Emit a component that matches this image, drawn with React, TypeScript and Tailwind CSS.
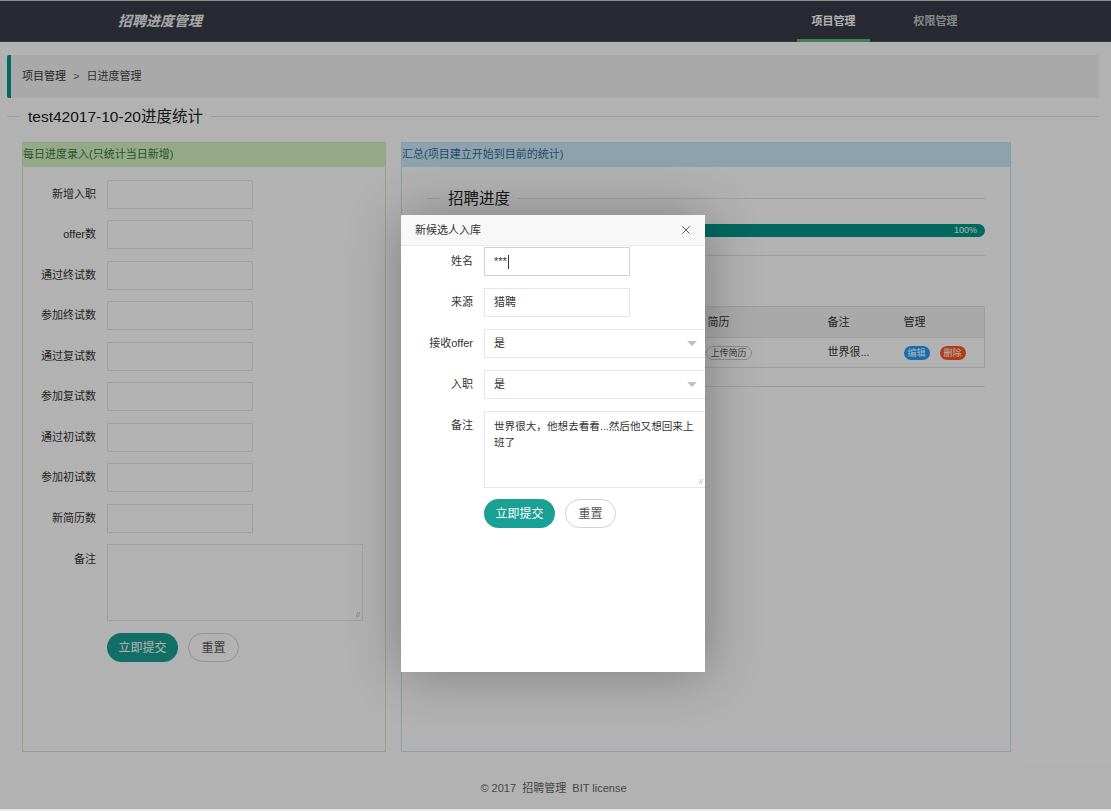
import { X } from "lucide-react";

const font = { fontFamily: '"Liberation Sans", "Noto Sans CJK SC", sans-serif' };

const dailyFields = [
  "新增入职",
  "offer数",
  "通过终试数",
  "参加终试数",
  "通过复试数",
  "参加复试数",
  "通过初试数",
  "参加初试数",
  "新简历数",
];

function Legend({ title, className }: { title: string; className?: string }) {
  return (
    <div className={`flex items-center ${className ?? ""}`}>
      <div className="h-px w-[13px] bg-[#e2e2e2]" />
      <span className="px-2 text-[15.5px] leading-none text-[#222]">{title}</span>
      <div className="h-px flex-1 bg-[#e2e2e2]" />
    </div>
  );
}

function PillButtons() {
  return (
    <div className="flex gap-[10px]">
      <button className="h-[29px] w-[71px] rounded-full bg-[#1aa094] text-[12px] text-white">立即提交</button>
      <button className="h-[29px] w-[51px] rounded-full border border-[#d2d2d2] bg-white text-[12px] text-[#555]">
        重置
      </button>
    </div>
  );
}

function Modal() {
  return (
    <div className="absolute left-[401px] top-[215px] h-[457px] w-[304px] overflow-hidden bg-white shadow-[1px_1px_50px_rgba(0,0,0,0.3)]">
      <div className="flex h-[31px] items-center justify-between border-b border-[#eee] bg-[#f8f8f8] pl-[14px] pr-[12px]">
        <span className="text-[11px] text-[#333]">新候选人入库</span>
        <X size={14} strokeWidth={1.6} className="text-[#555]" />
      </div>
      <div className="pt-[1px]">
        <div className="mb-[12px] flex items-center">
          <label className="w-[72px] text-right text-[11px] text-[#333]">姓名</label>
          <div className="ml-[11px] flex h-[29px] w-[146px] items-center border border-[#d2d2d2] px-[9px] text-[11px] text-[#333]">
            ***<span className="ml-px h-[14px] w-px bg-[#333]" />
          </div>
        </div>
        <div className="mb-[12px] flex items-center">
          <label className="w-[72px] text-right text-[11px] text-[#333]">来源</label>
          <div className="ml-[11px] flex h-[29px] w-[146px] items-center border border-[#e6e6e6] px-[9px] text-[11px] text-[#333]">
            猎聘
          </div>
        </div>
        {["接收offer", "入职"].map((l) => (
          <div key={l} className="mb-[12px] flex items-center">
            <label className="w-[72px] text-right text-[11px] text-[#333]">{l}</label>
            <div className="ml-[11px] flex h-[29px] flex-1 items-center justify-between border border-r-0 border-[#e6e6e6] pl-[9px] pr-[8px] text-[11px] text-[#333]">
              是
              <span className="h-0 w-0 border-x-[5px] border-t-[5px] border-x-transparent border-t-[#c2c2c2]" />
            </div>
          </div>
        ))}
        <div className="mb-[11px] flex">
          <label className="w-[72px] pt-[6px] text-right text-[11px] text-[#333]">备注</label>
          <div className="relative ml-[11px] h-[77px] flex-1 border border-r-0 border-[#e6e6e6] pl-[9px] pr-[4px] pt-[6px] text-[10.6px] leading-[16px] text-[#333]">
            世界很大，他想去看看...然后他又想回来上班了
            <span className="absolute bottom-[2px] right-[2px] text-[7px] leading-none text-[#999]">//</span>
          </div>
        </div>
        <div className="ml-[83px]">
          <PillButtons />
        </div>
      </div>
    </div>
  );
}

export default function App() {
  return (
    <div style={font} className="relative h-[811px] w-[1111px] overflow-hidden bg-white">
      <div className="flex h-full flex-col">
        <div className="h-px bg-[#c8c8c8]" />
        <header className="flex h-[41px] items-center border-b border-[#4a4e58] bg-[#393d49]">
          <div className="ml-[118px] text-[14px] font-bold italic text-[#f0f0f0]">招聘进度管理</div>
          <nav className="ml-auto mr-[139px] flex h-full text-[11px] font-bold">
            <div className="relative flex h-full w-[73px] items-center justify-center text-white">
              项目管理
              <span className="absolute bottom-[-1px] left-0 right-0 h-[3px] bg-[#5fb878]" />
            </div>
            <div className="ml-[29px] flex h-full w-[73px] items-center justify-center text-[#c2c2c2]">权限管理</div>
          </nav>
        </header>

        <div className="mx-[7px] mr-[12px] mt-[13px] flex h-[43px] items-center rounded-[2px] border-l-[4px] border-[#009688] bg-[#f2f2f2] pl-[11px] text-[11px] text-[#333]">
          项目管理
          <span className="mx-[7px] text-[#666]">&gt;</span>
          <span className="text-[#444]">日进度管理</span>
        </div>

        <Legend title="test42017-10-20进度统计" className="ml-[7px] mr-[12px] mt-[11px]" />

        <div className="ml-[22px] mt-[17px] flex gap-[15px]">
          <section className="flex h-[610px] w-[364px] flex-col border border-[#d6e9c6]">
            <div className="flex h-[24px] items-center bg-[#d3f2c3] text-[11px] text-[#3c763d]">
              每日进度录入(只统计当日新增)
            </div>
            <div className="pt-[13px]">
              {dailyFields.map((f) => (
                <div key={f} className="mb-[11.5px] flex items-center">
                  <label className="w-[73px] text-right text-[11px] text-[#333]">{f}</label>
                  <div className="ml-[11px] h-[29px] w-[146px] border border-[#e6e6e6] bg-white" />
                </div>
              ))}
              <div className="mb-[12px] flex">
                <label className="w-[73px] pt-[7px] text-right text-[11px] text-[#333]">备注</label>
                <div className="relative ml-[11px] h-[77px] w-[256px] border border-[#e6e6e6] bg-white">
                  <span className="absolute bottom-[2px] right-[2px] text-[7px] leading-none text-[#999]">//</span>
                </div>
              </div>
              <div className="ml-[84px]">
                <PillButtons />
              </div>
            </div>
          </section>

          <section className="flex h-[610px] w-[610px] flex-col border border-[#bce8f1]">
            <div className="flex h-[24px] items-center bg-[#cbe8fa] text-[11px] text-[#31708f]">
              汇总(项目建立开始到目前的统计)
            </div>
            <div className="px-[25px] pt-[24px]">
              <Legend title="招聘进度" />
              <div className="mt-[18px] flex h-[13px] items-center justify-end rounded-full bg-[#009688] pr-[8px] text-[9px] text-white">
                100%
              </div>
              <div className="mt-[18px] h-px bg-[#e2e2e2]" />
              {/* section under the modal: only the table edge shows */}
              <table className="mt-[50px] w-full border border-[#e2e2e2] text-left text-[11px] text-[#333]">
                <thead>
                  <tr className="h-[31px] bg-[#f2f2f2]">
                    <th className="w-[278px]" />
                    <th className="w-[122px] pl-[2px] font-normal">简历</th>
                    <th className="w-[76px] font-normal">备注</th>
                    <th className="font-normal">管理</th>
                  </tr>
                </thead>
                <tbody>
                  <tr className="h-[30px] border-t border-[#e2e2e2]">
                    <td />
                    <td>
                      <span className="rounded-full border border-[#c9c9c9] px-[4px] py-px text-[9px] text-[#555]">上传简历</span>
                    </td>
                    <td>世界很...</td>
                    <td>
                      <span className="rounded-full bg-[#1e9fff] px-[4px] py-[2px] text-[9px] text-white">编辑</span>
                      <span className="ml-[10px] rounded-full bg-[#ff5722] px-[4px] py-[2px] text-[9px] text-white">删除</span>
                    </td>
                  </tr>
                </tbody>
              </table>
              <div className="mt-[18px] h-px bg-[#e2e2e2]" />
            </div>
          </section>
        </div>

        <footer className="mt-[28px] text-center text-[11px] text-[#666]">
          <span className="ml-[-4px]">© 2017&nbsp;&nbsp;招聘管理&nbsp;&nbsp;BIT license</span>
        </footer>
      </div>

      <div className="absolute inset-0 bg-black/30" />
      <div className="absolute bottom-0 left-0 right-0 h-[2px] bg-[#e8e8e8]" />
      <Modal />
    </div>
  );
}
